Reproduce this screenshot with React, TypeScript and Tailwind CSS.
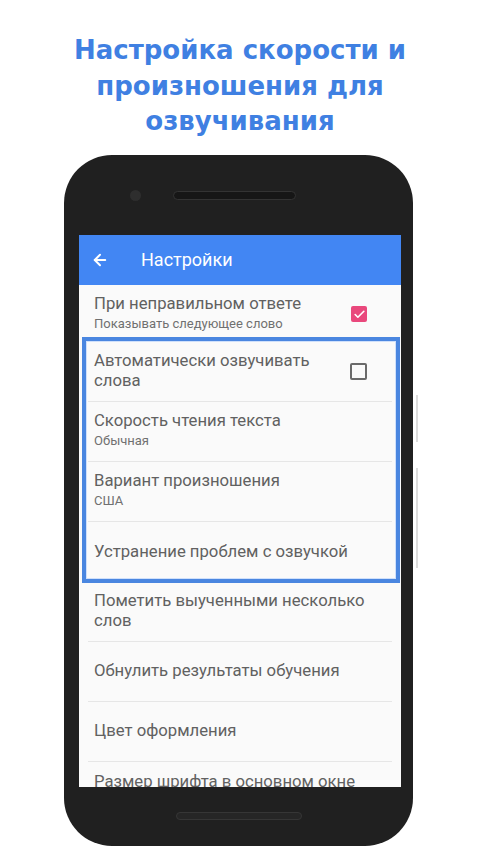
import { ArrowLeft, Check } from "lucide-react";

interface Setting {
  title: string;
  subtitle?: string;
  checkbox?: "on" | "off";
  height?: string;
  top?: boolean;
}

const settings: Setting[] = [
  { title: "При неправильном ответе", subtitle: "Показывать следующее слово", checkbox: "on", height: "h-[57px] pt-[2px]" },
  { title: "Автоматически озвучивать слова", checkbox: "off" },
  { title: "Скорость чтения текста", subtitle: "Обычная" },
  { title: "Вариант произношения", subtitle: "США" },
  { title: "Устранение проблем с озвучкой" },
  { title: "Пометить выученными несколько слов" },
  { title: "Обнулить результаты обучения" },
  { title: "Цвет оформления" },
  { title: "Размер шрифта в основном окне", top: true },
];

function SettingRow({ item, last }: { item: Setting; last: boolean }) {
  return (
    <div className={`${item.height ?? "h-[60px]"} shrink-0 flex flex-col`}>
      <div className={`flex-1 flex pl-[15px] pr-[34px] ${item.top ? "items-start pt-[10px]" : "items-center"}`}>
        <div className="flex-1 min-w-0">
          <div className="text-[16.7px] leading-[20px] text-[#616161] w-[292px] max-w-full">{item.title}</div>
          {item.subtitle && (
            <div className="text-[13px] leading-[20px] text-[#707070]">{item.subtitle}</div>
          )}
        </div>
        {item.checkbox === "on" && (
          <div className="w-[16px] h-[16px] rounded-[2px] bg-[#e9487c] flex items-center justify-center ml-4">
            <Check className="w-[13px] h-[13px] text-white" strokeWidth={3} />
          </div>
        )}
        {item.checkbox === "off" && (
          <div className="w-[17px] h-[17px] rounded-[2px] border-2 border-[#6a6a6a] ml-4" />
        )}
      </div>
      {!last && <div className="mx-[9px] h-px bg-[#e6e6e6]" />}
    </div>
  );
}

export default function App() {
  return (
    <div className="w-[480px] h-[856px] bg-white overflow-hidden" style={{ fontFamily: "Roboto, 'Noto Sans', sans-serif" }}>
      {/* Heading */}
      <h1
        className="pt-[33px] text-center text-[26px] leading-[35.5px] font-bold text-[#3f80e2]"
        style={{ fontFamily: "'DejaVu Sans', Verdana, sans-serif" }}
      >
        Настройка скорости и<br />произношения для<br />озвучивания
      </h1>

      {/* Phone */}
      <div className="relative ml-[64px] mt-[15px] w-[349px] h-[691px] rounded-[48px] bg-[#202020] flex flex-col">
        {/* side buttons */}
        <div className="absolute left-[352px] top-[240px] w-[2px] h-[47px] bg-[#dcdcdc]" />
        <div className="absolute left-[352px] top-[313px] w-[2px] h-[100px] bg-[#dcdcdc]" />

        {/* top bezel */}
        <div className="h-[80px] flex items-center pt-[2px]">
          <div className="ml-[66px] w-[11px] h-[11px] rounded-full bg-[#2e2e2e]" />
          <div className="ml-[32px] w-[123px] h-[9px] rounded-full bg-[#161616] border border-[#333]" />
        </div>

        {/* screen */}
        <div className="relative ml-[15px] mr-[12px] h-[552px] bg-[#fafafa] flex flex-col overflow-hidden">
          <div className="h-[50px] shrink-0 bg-[#4286f3] flex items-center text-white">
            <ArrowLeft className="ml-[12px] w-[18px] h-[18px]" strokeWidth={2.6} />
            <span className="ml-[32px] text-[18px]">Настройки</span>
          </div>
          <div className="flex-1 flex flex-col overflow-hidden">
            {settings.map((s, i) => (
              <SettingRow key={i} item={s} last={i === 0 || i === 4} />
            ))}
          </div>

          {/* highlight frame */}
          <div className="absolute left-[3px] top-[102px] w-[318px] h-[246px] border-[4px] border-[#4a86e0] shadow-[inset_0_0_0_1px_#cfe0fb]" />
        </div>

        {/* bottom bezel */}
        <div className="flex-1 flex items-center justify-center">
          <div className="w-[126px] h-[8px] rounded-full bg-[#262626] border border-[#363636]" />
        </div>
      </div>
    </div>
  );
}
